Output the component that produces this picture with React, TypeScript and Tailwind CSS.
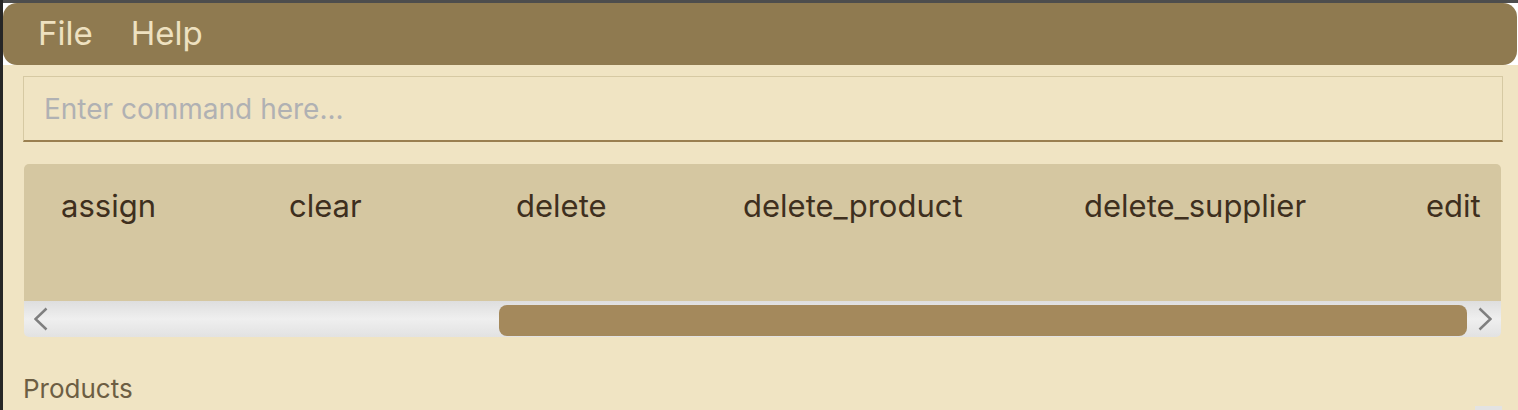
import React from "react";

const items: { label: string; w: string }[] = [
  { label: "assign", w: "w-[228px]" },
  { label: "clear", w: "w-[227px]" },
  { label: "delete", w: "w-[227px]" },
  { label: "delete_product", w: "w-[341px]" },
  { label: "delete_supplier", w: "w-[342px]" },
  { label: "edit", w: "w-[120px]" },
];

export default function App() {
  return (
    <div className="w-[1518px] h-[410px] overflow-hidden bg-[#f0e4c3] border-l-[3px] border-l-[#262626] font-['Inter',sans-serif]">
      <div className="border-t-[3px] border-t-[#4d4d4d] bg-white pr-[1px]">
        <div className="h-[62px] bg-[#8f7a50] rounded-[14px] flex items-center pl-[35px] gap-[38px] text-[33px] text-[#eee1c0]">
          <span>File</span>
          <span>Help</span>
        </div>
      </div>
      <div className="pl-[20px] pt-[11px]">
        <div className="w-[1480px] h-[66px] border border-[#d6c9a3] border-b-2 border-b-[#9a7f50] flex items-center pl-[20px] text-[28px] text-[#b0b1b3] bg-[#f0e4c3]">
          Enter command here...
        </div>
        <div className="mt-[22px] w-[1477px] ml-[1px]">
          <div className="h-[137px] bg-[#d5c7a1] rounded-t-[5px] flex items-start pl-[37px] pt-[22px] text-[31px] leading-[40px] text-[#3e2f1e]">
            {items.map((it) => (
              <div key={it.label} className={`${it.w} shrink-0 whitespace-nowrap`}>
                {it.label}
              </div>
            ))}
          </div>
          <div className="h-[36px] rounded-b-[5px] bg-gradient-to-b from-[#dedede] via-[#efefef] to-[#e2e2e2] flex items-center">
            <div className="w-[475px] h-full flex items-center pl-[10px]">
              <svg width="14" height="24" viewBox="0 0 14 24">
                <polyline points="12.5,1.5 1.5,12 12.5,22.5" fill="none" stroke="#7f7f7f" strokeWidth="2.5" />
              </svg>
            </div>
            <div className="w-[968px] h-[31px] mt-[3px] bg-[#a4895c] rounded-[8px]" />
            <div className="flex-1 h-full flex items-center pl-[11px]">
              <svg width="14" height="24" viewBox="0 0 14 24">
                <polyline points="1.5,1.5 12.5,12 1.5,22.5" fill="none" stroke="#7f7f7f" strokeWidth="2.5" />
              </svg>
            </div>
          </div>
        </div>
        <div className="mt-[35px] text-[26px] leading-[34px] text-[#6d5e43]">Products</div>
        <div className="flex justify-end w-[1479px]">
          <div className="w-[27px] h-[10px] bg-[#e3e3e3]" />
        </div>
      </div>
    </div>
  );
}
